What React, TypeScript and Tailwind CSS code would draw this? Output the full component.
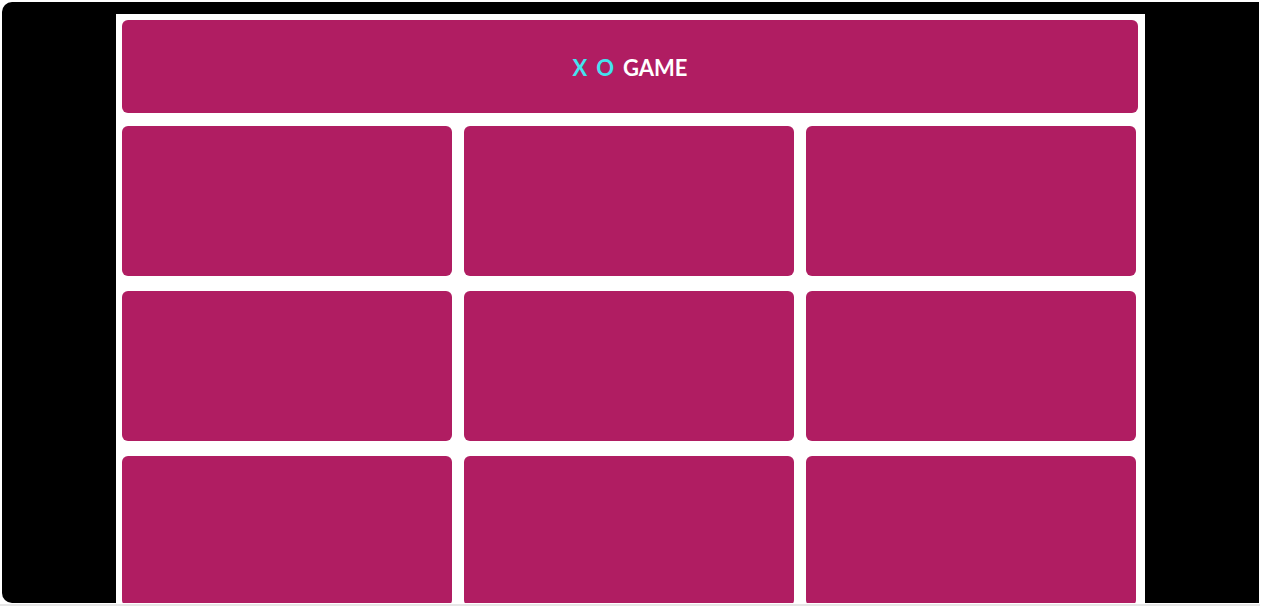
export default function App() {
    const cells = Array.from({ length: 9 }, (_, i) => i);

    return (
        <div className="h-[607px] w-[1262px] overflow-hidden bg-white">
            <div className="ml-[2px] mt-[2px] flex h-[601px] w-[1257px] justify-start overflow-hidden rounded-l-[10px] bg-black pl-[114px]">
                <div className="mt-[12px] flex w-[1029px] flex-col bg-white p-[6px] pb-0">
                    <div className="flex h-[93px] w-[1016px] shrink-0 items-center justify-center rounded-[6px] bg-[#b01d62] pt-[2px] font-['Lato','DejaVu_Sans',sans-serif] text-[22px] font-bold">
                        <span className="text-[#44e2ef]">X</span>
                        <span className="ml-[9px] text-[#44e2ef]">O</span>
                        <span className="ml-[9px] text-white">GAME</span>
                    </div>
                    <div className="mt-[13px] grid shrink-0 grid-cols-[330px_330px_330px] gap-x-[12px] gap-y-[15px]">
                        {cells.map((c) => (
                            <button
                                key={c}
                                className="h-[150px] rounded-[6px] bg-[#b01d62]"
                            />
                        ))}
                    </div>
                </div>
            </div>
            <div className="mt-[1px] h-[2px] w-[1260px] bg-[#e6e6e6]" />
        </div>
    );
}
